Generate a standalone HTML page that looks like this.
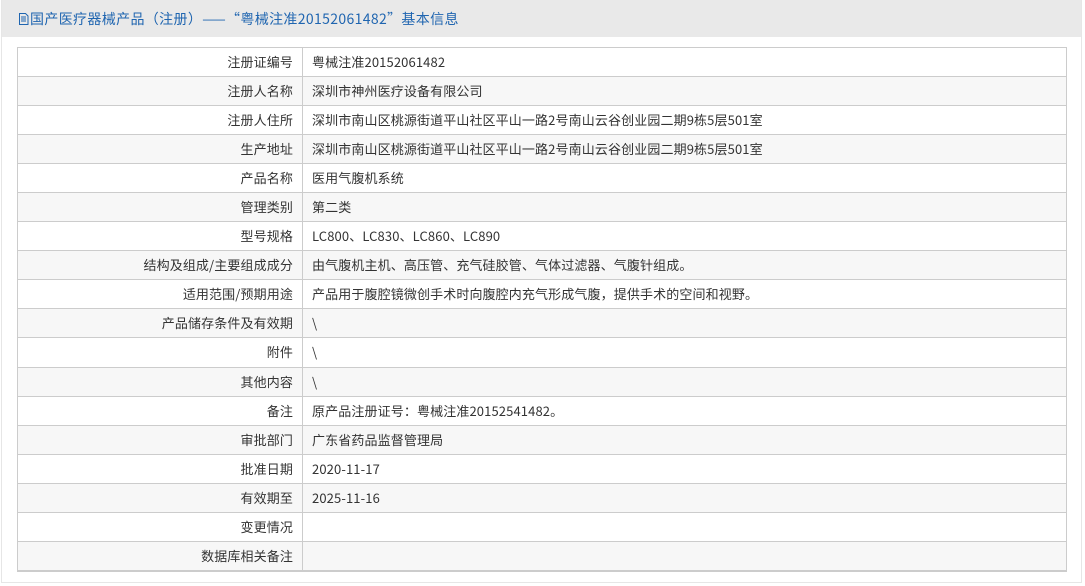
<!DOCTYPE html><html><head><meta charset="utf-8"><style>
body{margin:0;background:#fff;font-family:"Noto Sans CJK SC","Liberation Sans",sans-serif;}
.panel{position:absolute;left:1px;top:0;width:1079px;height:582px;border:1px solid #e6e6e6;border-top:none;background:#fff;}
.hd{height:37px;background:#e9e9e9;color:#1f65b0;font-size:14px;line-height:38px;padding-left:16px;white-space:nowrap;letter-spacing:0.35px;}
table{position:absolute;left:15px;top:47px;width:1050px;border-collapse:collapse;border:1px solid #ccc;border-bottom:2px solid #ccc;font-size:13px;color:#333;}
td{height:28.06px;border:1px solid #ccc;padding:0 9px;line-height:20px;white-space:nowrap;letter-spacing:0.12px;}
td.l{width:266px;text-align:right;}
tr:nth-child(even) td{background:#f7f7f7;}
</style></head><body><div class="panel"><div class="hd"><svg width="11" height="12" viewBox="0 0 11 12" style="vertical-align:-1px;margin-right:1px"><path d="M1.5 .5h6l2.5 2.5v8.5h-8.5z M3 4h5M3 6h5M3 8h5" fill="none" stroke="#1f65b0"/></svg>国产医疗器械产品（注册）——“粤械注准20152061482”基本信息</div>
<table>
<tr><td class="l">注册证编号</td><td>粤械注准20152061482</td></tr>
<tr><td class="l">注册人名称</td><td>深圳市神州医疗设备有限公司</td></tr>
<tr><td class="l">注册人住所</td><td>深圳市南山区桃源街道平山社区平山一路2号南山云谷创业园二期9栋5层501室</td></tr>
<tr><td class="l">生产地址</td><td>深圳市南山区桃源街道平山社区平山一路2号南山云谷创业园二期9栋5层501室</td></tr>
<tr><td class="l">产品名称</td><td>医用气腹机系统</td></tr>
<tr><td class="l">管理类别</td><td>第二类</td></tr>
<tr><td class="l">型号规格</td><td>LC800、LC830、LC860、LC890</td></tr>
<tr><td class="l">结构及组成/主要组成成分</td><td>由气腹机主机、高压管、充气硅胶管、气体过滤器、气腹针组成。</td></tr>
<tr><td class="l">适用范围/预期用途</td><td>产品用于腹腔镜微创手术时向腹腔内充气形成气腹，提供手术的空间和视野。</td></tr>
<tr><td class="l">产品储存条件及有效期</td><td>\</td></tr>
<tr><td class="l">附件</td><td>\</td></tr>
<tr><td class="l">其他内容</td><td>\</td></tr>
<tr><td class="l">备注</td><td>原产品注册证号：粤械注准20152541482。</td></tr>
<tr><td class="l">审批部门</td><td>广东省药品监督管理局</td></tr>
<tr><td class="l">批准日期</td><td>2020-11-17</td></tr>
<tr><td class="l">有效期至</td><td>2025-11-16</td></tr>
<tr><td class="l">变更情况</td><td></td></tr>
<tr><td class="l">数据库相关备注</td><td></td></tr>
</table></div></body></html>
